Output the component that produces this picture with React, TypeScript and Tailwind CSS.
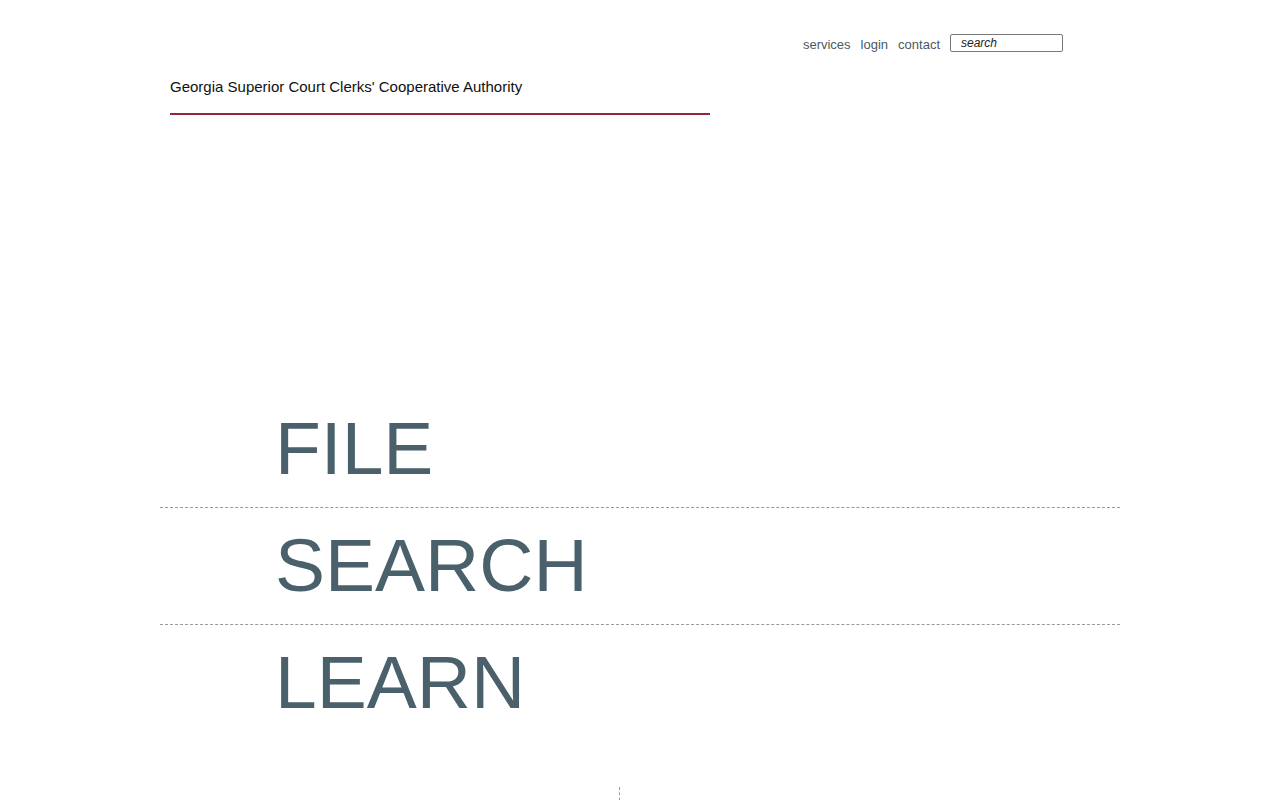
import React from "react";

const App: React.FC = () => {
  const links = ["services", "login", "contact"];
  const actions = ["FILE", "SEARCH", "LEARN"];

  return (
    <div className="min-h-screen bg-white font-['Liberation_Sans',Arial,sans-serif]">
      <div className="mx-auto w-[960px]">

        {/* Top nav */}
        <div className="flex items-start justify-end gap-[10px] pt-[34px] pr-[57px]">
          {links.map((link) => (
            <a key={link} href="#" className="text-[13px] leading-[18px] text-[#4a5a63] mt-[2px]">
              {link}
            </a>
          ))}
          <input
            type="text"
            defaultValue="search"
            className="w-[113px] h-[18px] rounded-[2px] border border-[#777] pl-[10px] text-[12px] italic text-[#222] outline-none"
          />
        </div>

        {/* Title */}
        <div className="ml-[10px] w-[540px] border-b-2 border-[#9b2335] pt-[24px] pb-[17px]">
          <h1 className="text-[15px] leading-[18px] text-[#111]">
            Georgia Superior Court Clerks' Cooperative Authority
          </h1>
        </div>

        {/* Actions */}
        <div className="mt-[276px]">
          {actions.map((item, index) => (
            <div
              key={item}
              className={
                index < actions.length - 1
                  ? "border-b border-dashed border-[#999] h-[117px]"
                  : "h-[117px]"
              }
            >
              <a href="#" className="block pl-[115px] text-[75px] leading-[114px] text-[#4a616b]">
                {item}
              </a>
            </div>
          ))}
        </div>

        {/* Divider */}
        <div className="mt-[45px] ml-[459px] h-[40px] border-l border-dashed border-[#999]" />
      </div>
    </div>
  );
};

export default App;
